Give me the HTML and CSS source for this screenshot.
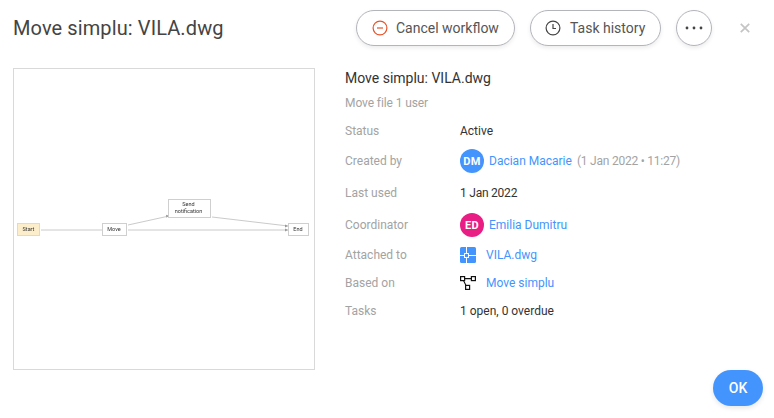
FILE: index.html
```html
<!DOCTYPE html>
<html lang="en">
<head>
<meta charset="utf-8">
<title>Move simplu: VILA.dwg</title>
<link rel="stylesheet" href="styles.css">
</head>
<body>
<div class="dialog">
  <header class="header">
    <h1 class="title">Move simplu: VILA.dwg</h1>
    <div class="actions">
      <button class="pill pill-cancel">
        <svg class="pill-icon" width="16" height="16" viewBox="0 0 16 16"><circle cx="8" cy="8" r="6.9" fill="none" stroke="#e8532b" stroke-width="1.2"/><path d="M5 8h6" stroke="#e8532b" stroke-width="1.2"/></svg>
        Cancel workflow
      </button>
      <button class="pill pill-history">
        <svg class="pill-icon" width="16" height="16" viewBox="0 0 16 16"><circle cx="8" cy="8" r="6.9" fill="none" stroke="#444" stroke-width="1.2"/><path d="M8 4v4.5h3" fill="none" stroke="#444" stroke-width="1.2"/></svg>
        Task history
      </button>
      <button class="pill pill-more" aria-label="More">
        <svg width="18" height="4" viewBox="0 0 18 4"><circle cx="2" cy="2" r="1.4" fill="#444"/><circle cx="9" cy="2" r="1.4" fill="#444"/><circle cx="16" cy="2" r="1.4" fill="#444"/></svg>
      </button>
      <button class="close" aria-label="Close">
        <svg width="10" height="10" viewBox="0 0 10 10"><path d="M.8.8l8.4 8.4M9.2.8L.8 9.2" stroke="#c4c4c4" stroke-width="1.7"/></svg>
      </button>
    </div>
  </header>
  <main class="body">
    <div class="preview">
      <svg class="diagram" width="300" height="300" viewBox="0 0 300 300">
        <g fill="none" stroke="#bdbdbd" stroke-width=".8">
          <path d="M27 161h62"/>
          <path d="M114 156l41-9"/>
          <path d="M114 161h160"/>
          <path d="M198 148l76 9"/>
        </g>
        <g fill="#999">
          <path d="M89 159.500l3 1.500-3 1.500z"/>
          <path d="M152 145.700l3 1.100-2.600 1.900z"/>
          <path d="M271 159.500l3 1.500-3 1.500z"/>
          <path d="M271 155.400l3 1.600-3 1.400z"/>
        </g>
        <rect class="node-start" x="3.500" y="154.500" width="22" height="12"/>
        <rect class="node" x="88.500" y="154.500" width="24" height="12"/>
        <rect class="node" x="154.500" y="130.500" width="42" height="18"/>
        <rect class="node" x="274.500" y="154.500" width="20" height="12"/>
        <text class="node-text" x="14.500" y="162">Start</text>
        <text class="node-text" x="100" y="162">Move</text>
        <text class="node-text" x="174.500" y="137">Send</text>
        <text class="node-text" x="174.500" y="143.500">notification</text>
        <text class="node-text" x="284" y="162">End</text>
      </svg>
    </div>
    <section class="details">
      <h2 class="name">Move simplu: VILA.dwg</h2>
      <p class="description">Move file 1 user</p>
      <div class="rows">
        <div class="row"><span class="label">Status</span><span class="value">Active</span></div>
        <div class="row row-avatar row-spaced"><span class="label">Created by</span><span class="value"><span class="avatar avatar-blue">DM</span><a class="link">Dacian Macarie</a><span class="meta date">(1 Jan 2022 • 11:27)</span></span></div>
        <div class="row row-spaced"><span class="label">Last used</span><span class="value date">1 Jan 2022</span></div>
        <div class="row row-avatar"><span class="label">Coordinator</span><span class="value"><span class="avatar avatar-pink">ED</span><a class="link">Emilia Dumitru</a></span></div>
        <div class="row"><span class="label">Attached to</span><span class="value">
          <svg class="file-icon" width="16" height="16" viewBox="0 0 16 16"><rect width="16" height="16" rx="1.500" fill="#4494fd"/><path d="M0 8.500h16M6.500 0v16" stroke="#fff" stroke-width="1"/><rect x="4.500" y="6.500" width="4" height="4" fill="#4494fd" stroke="#fff" stroke-width="1"/></svg>
          <a class="link">VILA.dwg</a></span></div>
        <div class="row"><span class="label">Based on</span><span class="value">
          <svg class="file-icon" width="16" height="14" viewBox="0 0 16 14"><g fill="#fff" stroke="#111" stroke-width="1.200"><rect x=".6" y=".6" width="4" height="4"/><rect x="11.400" y=".6" width="4" height="4"/><rect x="5.600" y="9.400" width="4" height="4"/></g><path d="M4.600 2.600h6.800M3.500 4.600l2.500 4.800" stroke="#111" stroke-width="1.100"/></svg>
          <a class="link">Move simplu</a></span></div>
        <div class="row"><span class="label">Tasks</span><span class="value">1 open, 0 overdue</span></div>
      </div>
    </section>
  </main>
  <footer class="footer"><button class="ok">OK</button></footer>
</div>
</body>
</html>
```
FILE: styles.css
```css
* { box-sizing: border-box; }
html, body { margin: 0; height: 100%; background: #fff; }
body { font-family: Roboto, "Noto Sans", sans-serif; color: #333; overflow: hidden; }
button { font-family: inherit; cursor: pointer; }
.dialog { width: 774px; height: 418px; display: flex; flex-direction: column; padding: 10px 11px 12px 13px; }
.header { display: flex; align-items: center; justify-content: space-between; height: 36px; }
.title { margin: 0; font-size: 20px; font-weight: 400; color: #444; line-height: 36px; letter-spacing: .1px; }
.actions { display: flex; align-items: center; gap: 15px; }
.pill { height: 36px; border-radius: 18px; border: 1px solid #b3b5bb; background: #fff; color: #555; font-size: 14px; display: flex; align-items: center; padding: 0; box-shadow: 0 2px 4px rgba(0,0,0,.08); }
.pill-cancel { width: 159px; padding-left: 15px; }
.pill-history { width: 131px; padding-left: 14px; }
.pill-history .pill-icon { margin-right: 9px; }
.pill-icon { margin-right: 8px; flex: none; }
.pill-more { width: 36px; justify-content: center; }
.close { width: 36px; height: 36px; border: 0; background: none; padding: 0; display: flex; align-items: center; justify-content: center; }
.body { display: flex; margin-top: 22px; flex: 1; }
.preview { width: 302px; height: 302px; border: 1px solid #d9d9d9; flex: none; }
.diagram { display: block; filter: blur(.35px); }
.node { fill: #fff; stroke: #cfcfcf; stroke-width: 1; }
.node-start { fill: #fdeecb; stroke: #fbd88f; stroke-width: 1; }
.node-text { font-family: Roboto, sans-serif; font-size: 5.500px; fill: #333; text-anchor: middle; }
.details { margin-left: 30px; flex: 1; }
.name { margin: 0; font-size: 14px; font-weight: 400; line-height: 20px; color: #333; }
.description { margin: 5px 0 0; font-size: 12px; line-height: 20px; color: #a3a3a3; letter-spacing: -.1px; }
.rows { display: flex; flex-direction: column; gap: 8px; margin-top: 8px; }
.row { display: flex; align-items: center; height: 20px; font-size: 12px; }
.row-avatar { height: 24px; }
.row-spaced { margin-bottom: 2px; }
.label { width: 115px; color: #a3a3a3; flex: none; }
.value { display: flex; align-items: center; color: #333; }
.date { letter-spacing: -.23px; }
.avatar { width: 24px; height: 24px; border-radius: 50%; color: #fff; font-size: 11px; font-weight: 700; display: flex; align-items: center; justify-content: center; margin-right: 5px; letter-spacing: .4px; }
.avatar-blue { background: #4494fd; }
.avatar-pink { background: #e91e85; }
.link { color: #4494fd; }
.meta { color: #a3a3a3; margin-left: 5px; }
.file-icon { margin-right: 10px; flex: none; }
.footer { display: flex; justify-content: flex-end; }
.ok { width: 50px; height: 36px; border-radius: 18px; border: 0; background: #4494fd; color: #fff; font-size: 14px; font-weight: 500; box-shadow: 0 2px 5px rgba(0,0,0,.1); }
```
